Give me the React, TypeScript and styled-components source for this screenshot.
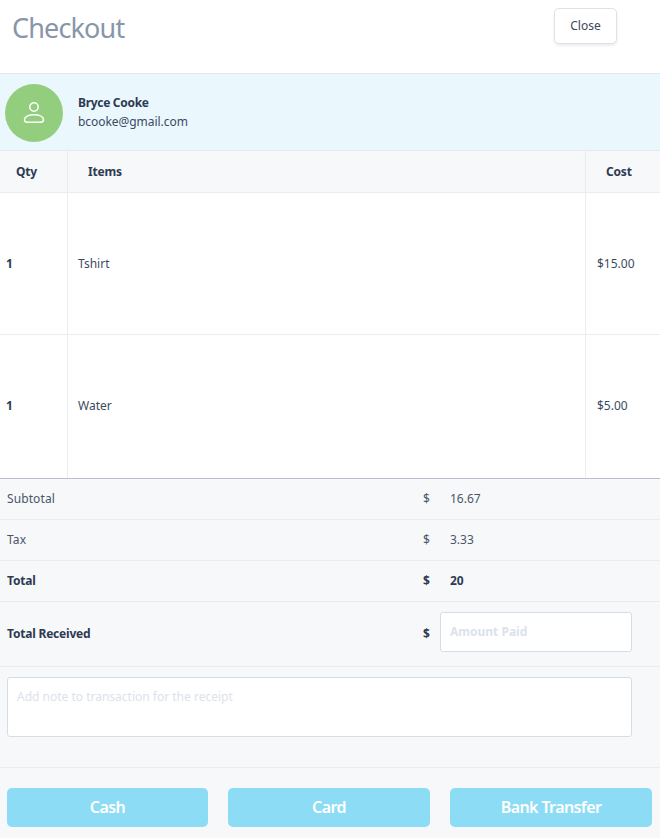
import React from 'react';
import styled, { createGlobalStyle } from 'styled-components';

const items = [
  { qty: 1, name: 'Tshirt', cost: '$15.00' },
  { qty: 1, name: 'Water', cost: '$5.00' },
];

const App: React.FC = () => {
  return (
    <Wrapper>
      <GlobalStyle />
      <Header>
        <Title>Checkout</Title>
        <CloseButton>Close</CloseButton>
      </Header>
      <Customer>
        <Avatar>
          <svg width='24' height='22' viewBox='0 0 24 22' fill='none' stroke='#fff' strokeWidth='1.5'>
            <circle cx='12' cy='5' r='4.2' />
            <path d='M2.5 17.8C2.5 14.8 6.5 12.8 12 12.8S21.5 14.8 21.5 17.8C21.5 19.3 20.6 20.2 19 20.2H5C3.4 20.2 2.5 19.3 2.5 17.8Z' />
          </svg>
        </Avatar>
        <div>
          <CustomerName>Bryce Cooke</CustomerName>
          <CustomerEmail>bcooke@gmail.com</CustomerEmail>
        </div>
      </Customer>
      <TableHead>
        <HeadCell $pad={16}>Qty</HeadCell>
        <HeadCell $pad={20}>Items</HeadCell>
        <HeadCell $pad={20}>Cost</HeadCell>
      </TableHead>
      {items.map((item, index) => {
        return (
          <ItemRow key={item.name} $last={index === items.length - 1}>
            <QtyCell>{item.qty}</QtyCell>
            <ItemCell>{item.name}</ItemCell>
            <CostCell>{item.cost}</CostCell>
          </ItemRow>
        );
      })}
      <Summary>
        <SummaryRow>
          <SummaryLabel>Subtotal</SummaryLabel>
          <Dollar>$</Dollar>
          <SummaryValue>16.67</SummaryValue>
        </SummaryRow>
        <SummaryRow>
          <SummaryLabel>Tax</SummaryLabel>
          <Dollar>$</Dollar>
          <SummaryValue>3.33</SummaryValue>
        </SummaryRow>
        <SummaryRow>
          <SummaryLabel $bold>Total</SummaryLabel>
          <Dollar $bold>$</Dollar>
          <SummaryValue $bold>20</SummaryValue>
        </SummaryRow>
        <ReceivedRow>
          <SummaryLabel $bold>Total Received</SummaryLabel>
          <Dollar $bold>$</Dollar>
          <AmountInput placeholder='Amount Paid' />
        </ReceivedRow>
        <NoteRow>
          <NoteInput placeholder='Add note to transaction for the receipt' />
        </NoteRow>
        <PayRow>
          <PayButton>Cash</PayButton>
          <PayButton>Card</PayButton>
          <PayButton>Bank Transfer</PayButton>
        </PayRow>
      </Summary>
    </Wrapper>
  );
};

const GlobalStyle = createGlobalStyle`
  body {
    margin: 0;
    background: #fff;
    font-family: 'Noto Sans', sans-serif;
    color: #2e3a52;
  }
`;

const Wrapper = styled.div`
  display: flex;
  flex-direction: column;
  width: 660px;
  height: 838px;
  overflow: hidden;
`;

const Header = styled.div`
  display: flex;
  justify-content: space-between;
  align-items: flex-start;
  height: 73px;
  padding: 8px 43px 0 12px;
  box-sizing: border-box;
`;

const Title = styled.h2`
  margin: 1px 0 0;
  font-size: 27px;
  line-height: 37px;
  font-weight: 400;
  letter-spacing: -0.85px;
  color: #8896aa;
`;

const CloseButton = styled.button`
  width: 63px;
  height: 36px;
  padding: 0 0 2px;
  background: #fff;
  border: 1px solid #dde2ea;
  border-radius: 5px;
  box-shadow: 0 2px 3px rgba(60, 80, 110, 0.1);
  font-family: inherit;
  font-size: 12px;
  color: #3c4858;
`;

const Customer = styled.div`
  display: flex;
  align-items: center;
  gap: 15px;
  height: 78px;
  padding-left: 5px;
  box-sizing: border-box;
  background: #eaf7fd;
  border-top: 1px solid #dfe8ee;
  border-bottom: 1px solid #e6ebf0;
`;

const Avatar = styled.div`
  display: flex;
  align-items: center;
  justify-content: center;
  width: 58px;
  height: 58px;
  margin-top: 2px;
  border-radius: 50%;
  background: #93ce7e;
`;

const CustomerName = styled.div`
  font-size: 12px;
  line-height: 19px;
  font-weight: 700;
  letter-spacing: -0.3px;
  color: #2e3a52;
`;

const CustomerEmail = styled.div`
  font-size: 12px;
  line-height: 19px;
  letter-spacing: -0.05px;
  color: #3c4a60;
`;

const TableHead = styled.div`
  display: grid;
  grid-template-columns: 68px 518px 1fr;
  height: 42px;
  box-sizing: border-box;
  background: #f6f8fa;
  border-bottom: 1px solid #e9edf2;
`;

const HeadCell = styled.div<{ $pad?: number }>`
  display: flex;
  align-items: center;
  padding-left: ${(props) => props.$pad || 0}px;
  font-size: 12px;
  font-weight: 700;
  letter-spacing: -0.2px;
  color: #2e3a52;
  border-right: 1px solid #e9edf2;

  &:last-child {
    border-right: none;
  }
`;

const ItemRow = styled.div<{ $last?: boolean }>`
  display: grid;
  grid-template-columns: 68px 518px 1fr;
  height: ${(props) => (props.$last ? 143 : 142)}px;
  box-sizing: border-box;
  border-bottom: ${(props) => (props.$last ? 'none' : '1px solid #e9edf2')};

  > div {
    padding-bottom: ${(props) => (props.$last ? 2 : 0)}px;
  }
`;

const Cell = styled.div`
  display: flex;
  align-items: center;
  font-size: 12px;
  color: #3c4a60;
`;

const QtyCell = styled(Cell)`
  padding-left: 6px;
  font-weight: 700;
  color: #2e3a52;
  border-right: 1px solid #e9edf2;
`;

const ItemCell = styled(Cell)`
  padding-left: 10px;
  border-right: 1px solid #e9edf2;
`;

const CostCell = styled(Cell)`
  padding-left: 11px;
`;

const Summary = styled.div`
  flex: 1;
  background: #f6f8fa;
  border-top: 1px solid #b9bfcc;
`;

const SummaryRow = styled.div`
  display: grid;
  grid-template-columns: 423px 27px 1fr;
  align-items: center;
  height: 41px;
  padding-bottom: 2px;
  box-sizing: border-box;
  border-bottom: 1px solid #e9edf2;
`;

const SummaryLabel = styled.div<{ $bold?: boolean }>`
  padding-left: 7px;
  font-size: 12px;
  font-weight: ${(props) => (props.$bold ? 700 : 400)};
  letter-spacing: ${(props) => (props.$bold ? '-0.2px' : '0.1px')};
  color: ${(props) => (props.$bold ? '#2e3a52' : '#4a5668')};
`;

const Dollar = styled.div<{ $bold?: boolean }>`
  font-size: 12px;
  font-weight: ${(props) => (props.$bold ? 700 : 400)};
  color: ${(props) => (props.$bold ? '#2e3a52' : '#4a5668')};
`;

const SummaryValue = styled.div<{ $bold?: boolean }>`
  font-size: 12px;
  font-weight: ${(props) => (props.$bold ? 700 : 400)};
  color: ${(props) => (props.$bold ? '#2e3a52' : '#4a5668')};
`;

const ReceivedRow = styled(SummaryRow)`
  grid-template-columns: 423px 17px 1fr;
  height: 65px;
`;

const AmountInput = styled.input`
  width: 192px;
  height: 40px;
  margin-bottom: 2px;
  padding: 0 9px 2px;
  box-sizing: border-box;
  background: #fff;
  border: 1px solid #d8dde5;
  border-radius: 3px;
  font-family: inherit;
  font-size: 12px;
  font-weight: 700;
  outline: none;

  &::placeholder {
    color: #dce2eb;
    opacity: 1;
  }
`;

const NoteRow = styled.div`
  height: 101px;
  padding: 10px 0 0 7px;
  box-sizing: border-box;
  border-bottom: 1px solid #e9edf2;
`;

const NoteInput = styled.textarea`
  display: block;
  width: 625px;
  height: 60px;
  padding: 10px 9px;
  box-sizing: border-box;
  background: #fff;
  border: 1px solid #d8dde5;
  border-radius: 3px;
  font-family: inherit;
  font-size: 12px;
  resize: none;
  outline: none;

  &::placeholder {
    color: #dce2eb;
    opacity: 1;
  }
`;

const PayRow = styled.div`
  display: grid;
  grid-template-columns: 201px 202px 202px;
  gap: 20px;
  padding: 20px 0 0 7px;
`;

const PayButton = styled.button`
  height: 39px;
  padding: 0 0 2px;
  border: none;
  border-radius: 5px;
  background: #8ddcf6;
  font-family: inherit;
  font-size: 16px;
  font-weight: 600;
  letter-spacing: -0.6px;
  color: #fff;
`;

export default App;
